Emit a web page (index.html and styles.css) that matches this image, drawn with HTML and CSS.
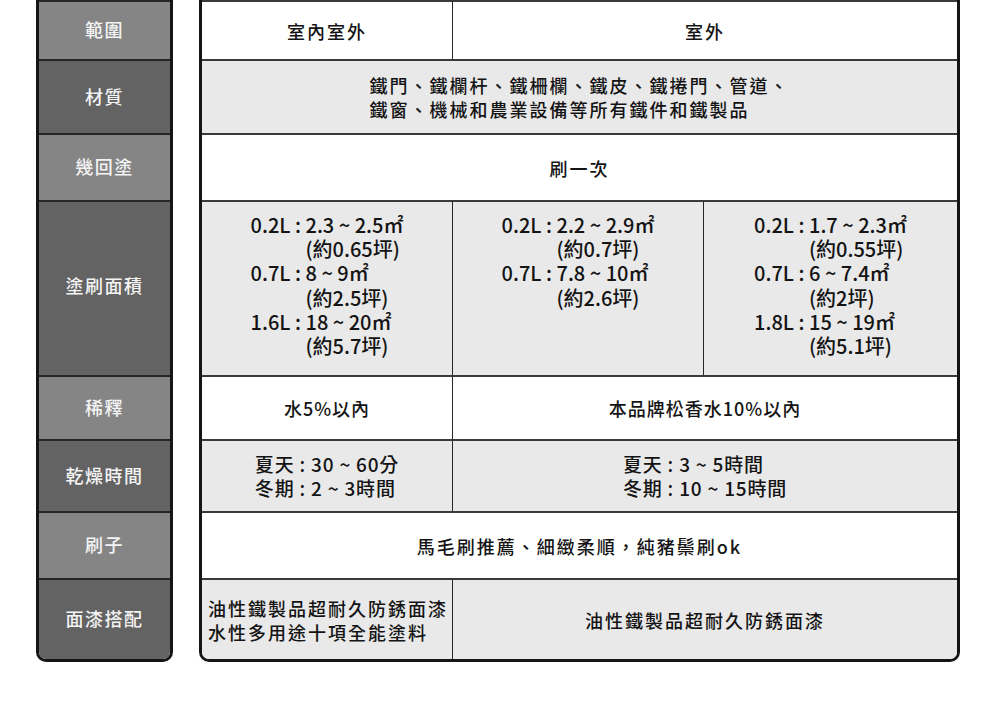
FILE: index.html
```html
<!DOCTYPE html>
<html lang="zh-Hant">
<head>
<meta charset="utf-8">
<link rel="stylesheet" href="styles.css">
</head>
<body>
<div class="sheet">
  <div class="labels">
    <div class="lab r1 light">範圍</div>
    <div class="lab r2 dark">材質</div>
    <div class="lab r3 light">幾回塗</div>
    <div class="lab r4 dark">塗刷面積</div>
    <div class="lab r5 light">稀釋</div>
    <div class="lab r6 dark">乾燥時間</div>
    <div class="lab r7 light">刷子</div>
    <div class="lab r8 dark">面漆搭配</div>
  </div>
  <div class="data">
    <div class="row r1 white">
      <div class="cell">室內室外</div>
      <div class="cell sep span2">室外</div>
    </div>
    <div class="row r2 gray">
      <div class="cell span3"><div class="block">鐵門、鐵欄杆、鐵柵欄、鐵皮、鐵捲門、管道、<br>鐵窗、機械和農業設備等所有鐵件和鐵製品</div></div>
    </div>
    <div class="row r3 white">
      <div class="cell span3">刷一次</div>
    </div>
    <div class="row r4 gray">
      <div class="cell top">
        <div class="area">
          <span class="k">0.2L : </span><span>2.3 ~ 2.5㎡</span>
          <span></span><span>(約0.65坪)</span>
          <span class="k">0.7L : </span><span>8 ~ 9㎡</span>
          <span></span><span>(約2.5坪)</span>
          <span class="k">1.6L : </span><span>18 ~ 20㎡</span>
          <span></span><span>(約5.7坪)</span>
        </div>
      </div>
      <div class="cell sep top">
        <div class="area">
          <span class="k">0.2L : </span><span>2.2 ~ 2.9㎡</span>
          <span></span><span>(約0.7坪)</span>
          <span class="k">0.7L : </span><span>7.8 ~ 10㎡</span>
          <span></span><span>(約2.6坪)</span>
        </div>
      </div>
      <div class="cell sep top">
        <div class="area">
          <span class="k">0.2L : </span><span>1.7 ~ 2.3㎡</span>
          <span></span><span>(約0.55坪)</span>
          <span class="k">0.7L : </span><span>6 ~ 7.4㎡</span>
          <span></span><span>(約2坪)</span>
          <span class="k">1.8L : </span><span>15 ~ 19㎡</span>
          <span></span><span>(約5.1坪)</span>
        </div>
      </div>
    </div>
    <div class="row r5 white">
      <div class="cell narrow">水5%以內</div>
      <div class="cell sep span2 narrow">本品牌松香水10%以內</div>
    </div>
    <div class="row r6 gray">
      <div class="cell"><div class="block time">夏天 : 30 ~ 60分<br>冬期 : 2 ~ 3時間</div></div>
      <div class="cell sep span2"><div class="block time">夏天 : 3 ~ 5時間<br>冬期 : 10 ~ 15時間</div></div>
    </div>
    <div class="row r7 white">
      <div class="cell span3">馬毛刷推薦、細緻柔順，純豬鬃刷ok</div>
    </div>
    <div class="row r8 gray">
      <div class="cell left"><div class="block">油性鐵製品超耐久防銹面漆<br>水性多用途十項全能塗料</div></div>
      <div class="cell sep span2">油性鐵製品超耐久防銹面漆</div>
    </div>
  </div>
</div>
</body>
</html>
```

FILE: styles.css
```css
* { box-sizing: border-box; }
html, body { margin: 0; padding: 0; background: #ffffff; }
body {
  font-family: "Noto Sans CJK TC", "Noto Sans", sans-serif;
  color: #141414;
}
.sheet {
  display: flex;
  align-items: flex-start;
  padding-left: 36px;
  gap: 26px;
}
.labels {
  width: 137px;
  border: 3px solid #151515;
  border-top: none;
  border-radius: 0 0 10px 10px;
  overflow: hidden;
  display: flex;
  flex-direction: column;
}
.data {
  width: 761px;
  border: 3px solid #151515;
  border-top: none;
  border-radius: 0 0 10px 10px;
  overflow: hidden;
  display: flex;
  flex-direction: column;
}
.r1 { height: 59px; }
.r2 { height: 74px; }
.r3 { height: 67px; }
.r4 { height: 175px; }
.r5 { height: 64px; }
.r6 { height: 72px; }
.r7 { height: 67px; }
.r8 { height: 81px; }

.lab {
  border-top: 2px solid #262626;
  display: flex;
  align-items: center;
  justify-content: center;
  color: #f4f4f4;
  font-size: 18px;
  font-weight: 500;
  letter-spacing: 1.5px;
  padding-bottom: 3px;
}
.lab.r4 { padding-bottom: 8px; }
.light { background: #858585; }
.dark { background: #636363; }

.row {
  border-top: 2px solid #3a3a3a;
  display: grid;
  grid-template-columns: 250px 251px 1fr;
}
.white { background: #ffffff; }
.gray { background: #e9e9e9; }
.cell {
  display: flex;
  align-items: center;
  justify-content: center;
  font-size: 18px;
  font-weight: 500;
  letter-spacing: 2px;
  line-height: 24px;
  text-align: center;
}
.sep { border-left: 1px solid #262626; }
.span2 { grid-column: span 2; }
.span3 { grid-column: span 3; }
.block { text-align: left; }
.narrow { letter-spacing: 1px; }
.time { font-size: 19px; letter-spacing: 0.8px; }
.cell.left { justify-content: flex-start; padding-left: 6px; }
.cell.top { align-items: flex-start; padding-top: 11px; }
.area {
  display: grid;
  grid-template-columns: auto auto;
  text-align: left;
  font-size: 20px;
  line-height: 24.2px;
  letter-spacing: 0;
}
.k { white-space: pre; }
```
